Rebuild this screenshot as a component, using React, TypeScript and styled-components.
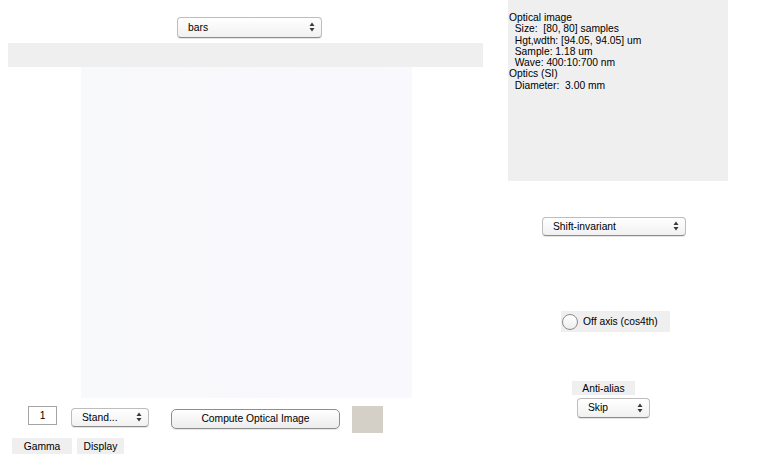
import React from "react";
import styled, { createGlobalStyle } from "styled-components";

const Global = createGlobalStyle`
  html, body { margin: 0; padding: 0; background: #ffffff; }
  body { font-family: "Liberation Sans", Arial, sans-serif; font-size: 10.3px; color: #000; }
  * { box-sizing: border-box; }
`;

const Page = styled.div`
  display: flex;
  width: 757px;
  height: 474px;
  overflow: hidden;
`;

const LeftCol = styled.div`
  width: 508px;
  display: flex;
  flex-direction: column;
  padding-top: 17px;
`;

const RightCol = styled.div`
  width: 249px;
  display: flex;
  flex-direction: column;
`;

const Popup = styled.div<{ $left: number; $top: number; $w: number; $h: number }>`
  margin-left: ${(p) => p.$left}px;
  margin-top: ${(p) => p.$top}px;
  width: ${(p) => p.$w}px;
  height: ${(p) => p.$h}px;
  border: 1px solid #bdbdbd;
  border-bottom-color: #8c8c8c;
  border-radius: 4px;
  background: linear-gradient(#ffffff, #f1f1f1);
  box-shadow: 0 1px 0 rgba(0, 0, 0, 0.1);
  display: flex;
  align-items: center;
  justify-content: space-between;
  padding: 0 6px 1px 10px;
  font-size: 10.3px;
  flex-shrink: 0;
`;

const Arrows = () => (
  <svg width="6" height="10" viewBox="0 0 6 10">
    <path d="M3 0.5 L5.5 4 L0.5 4 Z" fill="#3a3a3a" />
    <path d="M3 9.5 L5.5 6 L0.5 6 Z" fill="#3a3a3a" />
  </svg>
);

const GrayBar = styled.div`
  margin-left: 8px;
  margin-top: 5px;
  width: 475px;
  height: 24px;
  background: #efefef;
  flex-shrink: 0;
`;

const ImageArea = styled.div`
  margin-left: 81px;
  width: 331px;
  height: 331px;
  background: linear-gradient(90deg, #f8f9fb, #f9f8fd);
  flex-shrink: 0;
`;

const ControlRow = styled.div`
  display: flex;
  align-items: flex-start;
  margin-top: 8px;
  height: 27px;
`;

const EditBox = styled.div`
  margin-left: 28px;
  width: 29px;
  height: 19px;
  border: 1px solid #a4a4a4;
  background: #fff;
  display: flex;
  align-items: center;
  justify-content: center;
  font-size: 10.3px;
`;

const PushButton = styled.div`
  margin-left: 22px;
  margin-top: 3px;
  width: 169px;
  height: 20px;
  border: 1px solid #8e8e8e;
  border-radius: 5px;
  background: linear-gradient(#ffffff, #ececec);
  box-shadow: 0 1px 0 rgba(0, 0, 0, 0.1);
  display: flex;
  align-items: center;
  justify-content: center;
  padding-bottom: 2px;
  font-size: 10.3px;
`;

const Swatch = styled.div`
  margin-left: 12px;
  width: 31px;
  height: 27px;
  background: #d4d0c8;
`;

const LabelRow = styled.div`
  display: flex;
  margin-top: 5px;
`;

const Label = styled.div<{ $left: number; $top?: number; $w: number; $h?: number }>`
  margin-left: ${(p) => p.$left}px;
  margin-top: ${(p) => p.$top ?? 0}px;
  width: ${(p) => p.$w}px;
  height: ${(p) => p.$h ?? 16}px;
  background: #efefef;
  display: flex;
  align-items: center;
  justify-content: center;
  font-size: 10.3px;
  flex-shrink: 0;
`;

const InfoBox = styled.div`
  width: 220px;
  height: 181px;
  background: #efefef;
  padding: 12px 0 0 1px;
  font-size: 10.3px;
  line-height: 11.3px;
  white-space: pre;
  flex-shrink: 0;
`;

const RadioBox = styled.div`
  margin-left: 53px;
  margin-top: 75px;
  width: 109px;
  height: 21px;
  background: #efefef;
  display: flex;
  align-items: center;
  gap: 5px;
  padding-left: 1px;
  font-size: 10.3px;
  flex-shrink: 0;
`;

const RadioCircle = styled.div`
  width: 16px;
  height: 16px;
  border-radius: 50%;
  border: 1px solid #8a8a8a;
  background: linear-gradient(#ffffff, #eeeeee);
`;

const infoText = `Optical image
  Size:  [80, 80] samples
  Hgt,wdth: [94.05, 94.05] um
  Sample: 1.18 um
  Wave: 400:10:700 nm
Optics (SI)
  Diameter:  3.00 mm`;

export default function App() {
  return (
    <>
      <Global />
      <Page>
        <LeftCol>
          <Popup $left={177} $top={0} $w={145} $h={21}>
            <span>bars</span>
            <Arrows />
          </Popup>
          <GrayBar />
          <ImageArea />
          <ControlRow>
            <EditBox>1</EditBox>
            <Popup $left={14} $top={2} $w={78} $h={19}>
              <span>Stand...</span>
              <Arrows />
            </Popup>
            <PushButton>Compute Optical Image</PushButton>
            <Swatch />
          </ControlRow>
          <LabelRow>
            <Label $left={12} $w={60}>Gamma</Label>
            <Label $left={5} $w={47}>Display</Label>
          </LabelRow>
        </LeftCol>
        <RightCol>
          <InfoBox>{infoText}</InfoBox>
          <Popup $left={34} $top={36} $w={144} $h={19}>
            <span>Shift-invariant</span>
            <Arrows />
          </Popup>
          <RadioBox>
            <RadioCircle />
            <span>Off axis (cos4th)</span>
          </RadioBox>
          <Label $left={64} $top={49} $w={63} $h={14}>
            Anti-alias
          </Label>
          <Popup $left={69} $top={3} $w={73} $h={20}>
            <span>Skip</span>
            <Arrows />
          </Popup>
        </RightCol>
      </Page>
    </>
  );
}
